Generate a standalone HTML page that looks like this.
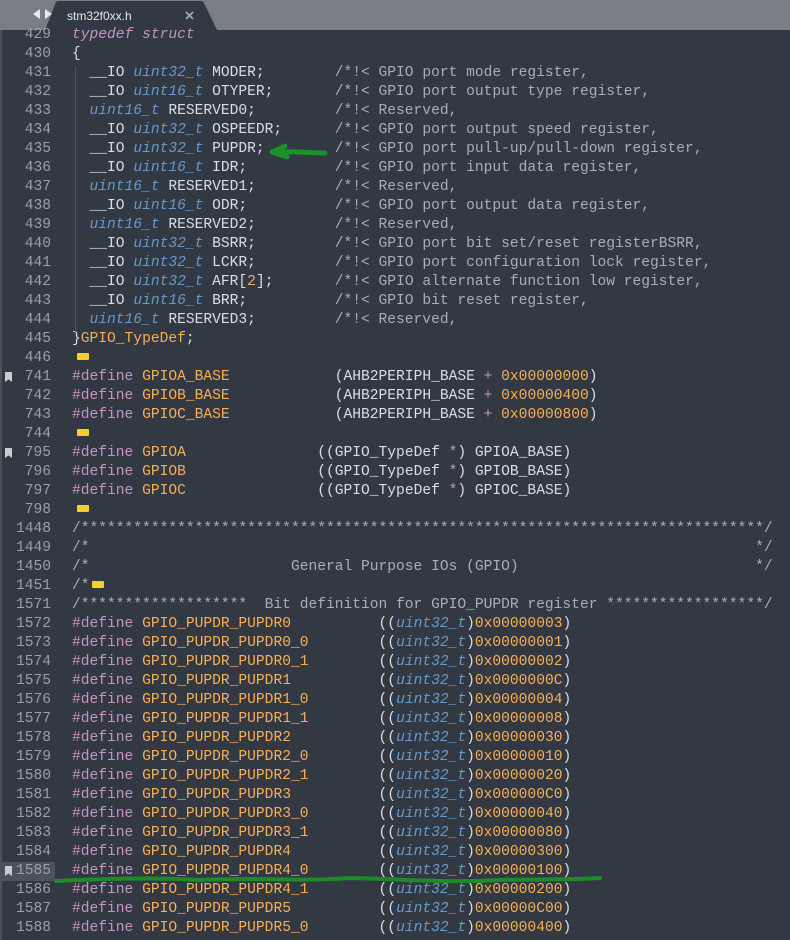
<!DOCTYPE html>
<html><head><meta charset="utf-8"><style>
html,body{margin:0;padding:0;width:790px;height:940px;overflow:hidden;background:#323942;}
#bar{position:absolute;left:0;top:0;width:790px;height:30px;background:#797d85;}
#tab{position:absolute;left:0;top:0;}
#ed{position:absolute;left:0;top:30px;width:790px;height:910px;background:#323942;border-left:2px solid #4a525c;box-sizing:border-box;}
.l{position:absolute;left:0;height:19px;width:790px;font-family:"Liberation Mono",monospace;font-size:14.6px;line-height:19px;white-space:pre;color:#d8dee9;}
.n{position:absolute;right:739px;color:#98a0ab;text-align:right;}
.c{position:absolute;left:72px;}
.k{color:#c594c5;font-style:italic}
.p{color:#c594c5}
.t{color:#6699cc;font-style:italic}
.o{color:#f9ae58}
.g{color:#a7adba}
.f{display:inline-block;width:12px;height:7px;background:#f5cf2c;border-radius:1px;vertical-align:middle;margin-left:5px;position:relative;top:-1px}
.bm{position:absolute;left:5px;top:4px;width:7px;height:10px;background:#c8ccd2;clip-path:polygon(0 0,100% 0,100% 100%,50% 75%,0 100%);}
.hl{background:#4a525d;}
</style></head><body>
<div id="bar"></div>
<svg id="tab" width="790" height="30">
<path d="M45 30 L56 2 Q57 1 59 1 L201 1 Q203 1 204 3 L217 30 Z" fill="#323942"/>
<path d="M40 9 L33 14 L40 19 Z M45 9 L52 14 L45 19 Z" fill="#e8e9eb"/>
<text x="67" y="20" font-family="Liberation Sans,sans-serif" font-size="12" fill="#e6e8eb">stm32f0xx.h</text>
<path d="M186 12 L193 19 M193 12 L186 19" stroke="#a9aeb5" stroke-width="1.6"/>
</svg>
<div id="ed"></div>
<div id="code"></div>
<svg width="790" height="940" style="position:absolute;left:0;top:0;pointer-events:none">
<line x1="75.5" y1="66" x2="75.5" y2="332" stroke="#4b525c" stroke-width="1"/>
<path d="M272 152 L285 146 M272 152 L287 157 M274 152 C290 151 310 153 325 153" stroke="#1a9a28" stroke-width="5" fill="none" stroke-linecap="round" opacity="0.9"/>
<path d="M56 881 C100 879 150 877 200 880 C250 877 300 882 350 878 C400 879 450 883 500 880 C540 879 570 880 600 878" stroke="#1e8a28" stroke-width="4" fill="none" stroke-linecap="round"/>
</svg>
<script>
function s(pre,vis,com){return pre+" ".repeat(Math.max(1,30-vis))+'<span class="g">/*!&lt; '+com+'</span>';}
function io(ty,nm,com){const v="  __IO "+ty+" "+nm;return s('  __IO <span class="t">'+ty+'</span> '+nm,v.length,com);}
function rs(nm){const v="  uint16_t "+nm;return s('  <span class="t">uint16_t</span> '+nm,v.length,"Reserved,");}
const L=[
["429",'<span class="k">typedef</span> <span class="k">struct</span>'],
["430",'{'],
["431",io("uint32_t","MODER;","GPIO port mode register,")],
["432",io("uint16_t","OTYPER;","GPIO port output type register,")],
["433",rs("RESERVED0;")],
["434",io("uint32_t","OSPEEDR;","GPIO port output speed register,")],
["435",io("uint32_t","PUPDR;","GPIO port pull-up/pull-down register,")],
["436",io("uint16_t","IDR;","GPIO port input data register,")],
["437",rs("RESERVED1;")],
["438",io("uint16_t","ODR;","GPIO port output data register,")],
["439",rs("RESERVED2;")],
["440",io("uint32_t","BSRR;","GPIO port bit set/reset registerBSRR,")],
["441",io("uint32_t","LCKR;","GPIO port configuration lock register,")],
["442",s('  __IO <span class="t">uint32_t</span> AFR[<span class="o">2</span>];',"  __IO uint32_t AFR[2];".length,"GPIO alternate function low register,")],
["443",io("uint16_t","BRR;","GPIO bit reset register,")],
["444",rs("RESERVED3;")],
["445",'}<span class="o">GPIO_TypeDef</span>;'],
["446",'<span class="f"></span>'],
["741",'<span class="p">#define</span> <span class="o">GPIOA_BASE</span>            (AHB2PERIPH_BASE <span class="p">+</span> <span class="o">0x00000000</span>)',1],
["742",'<span class="p">#define</span> <span class="o">GPIOB_BASE</span>            (AHB2PERIPH_BASE <span class="p">+</span> <span class="o">0x00000400</span>)'],
["743",'<span class="p">#define</span> <span class="o">GPIOC_BASE</span>            (AHB2PERIPH_BASE <span class="p">+</span> <span class="o">0x00000800</span>)'],
["744",'<span class="f"></span>'],
["795",'<span class="p">#define</span> <span class="o">GPIOA</span>               ((GPIO_TypeDef <span class="p">*</span>) GPIOA_BASE)',1],
["796",'<span class="p">#define</span> <span class="o">GPIOB</span>               ((GPIO_TypeDef <span class="p">*</span>) GPIOB_BASE)'],
["797",'<span class="p">#define</span> <span class="o">GPIOC</span>               ((GPIO_TypeDef <span class="p">*</span>) GPIOC_BASE)'],
["798",'<span class="f"></span>'],
["1448",'<span class="g">/'+"*".repeat(78)+'/</span>'],
["1449",'<span class="g">/*'+" ".repeat(76)+'*/</span>'],
["1450",'<span class="g">/*                       General Purpose IOs (GPIO)                           */</span>'],
["1451",'<span class="g">/*</span><span class="f" style="margin-left:2px"></span>'],
["1571",'<span class="g">/*******************  Bit definition for GPIO_PUPDR register ******************/</span>'],
];
const P=[["0","0x00000003"],["0_0","0x00000001"],["0_1","0x00000002"],["1","0x0000000C"],["1_0","0x00000004"],["1_1","0x00000008"],["2","0x00000030"],["2_0","0x00000010"],["2_1","0x00000020"],["3","0x000000C0"],["3_0","0x00000040"],["3_1","0x00000080"],["4","0x00000300"],["4_0","0x00000100"],["4_1","0x00000200"],["5","0x00000C00"],["5_0","0x00000400"]];
P.forEach((p,i)=>{const nm="GPIO_PUPDR_PUPDR"+p[0];L.push([String(1572+i),'<span class="p">#define</span> <span class="o">'+nm+'</span>'+" ".repeat(27-nm.length)+'((<span class="t">uint32_t</span>)<span class="o">'+p[1]+'</span>)',i==13?2:0]);});
let h="";L.forEach((r,i)=>{const top=26+i*19;h+='<div class="l" style="top:'+top+'px">'+(r[2]==2?'<div class="hl" style="position:absolute;left:2px;top:0;width:53px;height:19px"></div>':'')+(r[2]?'<div class="bm"></div>':'')+'<span class="n">'+r[0]+'</span><span class="c">'+r[1]+'</span></div>';});
document.getElementById("code").innerHTML=h;
</script>
</body></html>
